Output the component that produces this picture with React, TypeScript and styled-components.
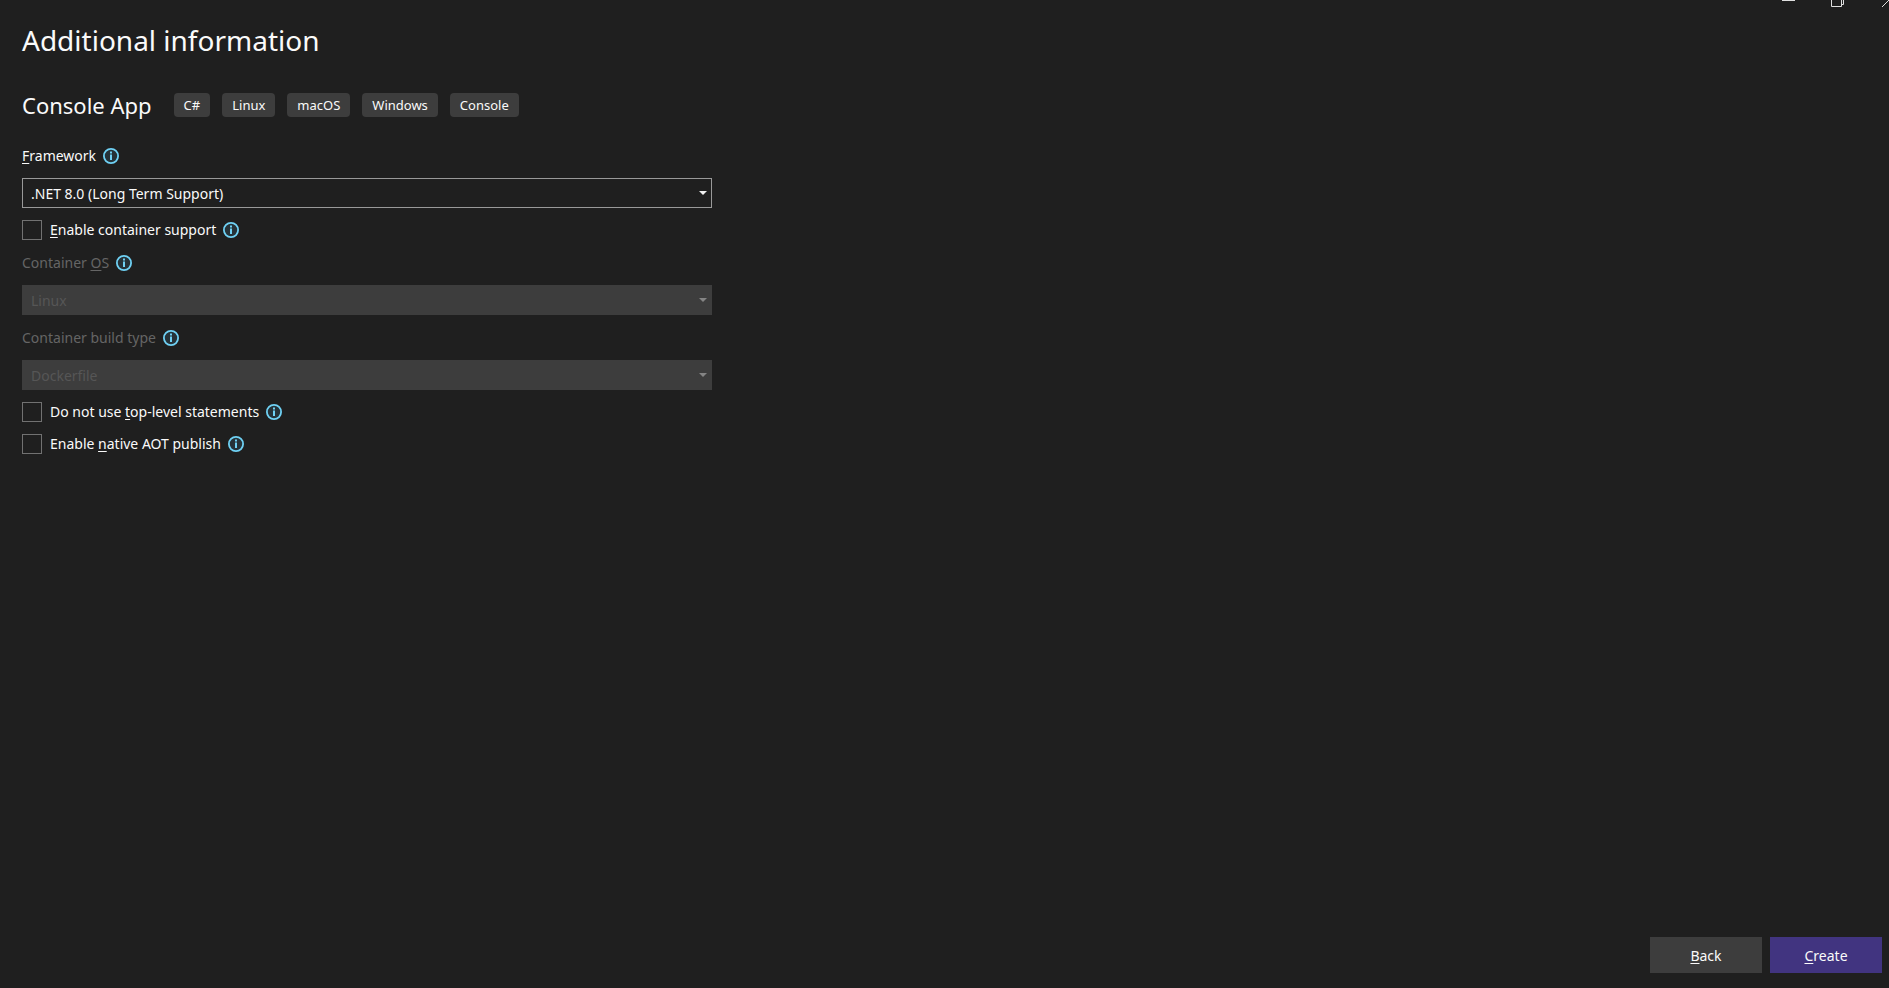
import React, { ReactNode } from "react";
import styled, { createGlobalStyle } from "styled-components";

const GlobalStyle = createGlobalStyle`
  * { box-sizing: border-box; }
  html, body, #root { height: 100%; }
  body {
    margin: 0;
    background: #1f1f1f;
    color: #fafafa;
    font: 14px/20px "Noto Sans", "Open Sans", sans-serif;
  }
`;

const Dialog = styled.div`
  min-height: 100%;
  display: flex;
  flex-direction: column;
  position: relative;
  overflow: hidden;
`;

const WindowControls = styled.div`
  position: absolute;
  top: 0;
  right: -24px;
  display: flex;
`;

const WindowButton = styled.button`
  width: 50px;
  height: 10px;
  padding: 0;
  border: 0;
  background: none;
  color: #e0e0e0;
  svg { display: block; }
`;

const Main = styled.main`
  flex: 1;
  padding: 20px 22px;
`;

const Title = styled.h1`
  margin: 0;
  font-size: 28px;
  line-height: 40px;
  font-weight: 400;
`;

const TemplateHeader = styled.div`
  display: flex;
  align-items: center;
  margin-top: 29px;
`;

const TemplateName = styled.h2`
  margin: 0 22px 0 0;
  font-size: 22px;
  line-height: 32px;
  font-weight: 400;
`;

const TagList = styled.ul`
  display: flex;
  gap: 12px;
  margin: 0;
  padding: 0;
  list-style: none;
`;

const Tag = styled.li`
  padding: 0 10px;
  border-radius: 4px;
  background: #3d3d3d;
  font-size: 13px;
  line-height: 24px;
`;

const Form = styled.form`
  max-width: 690px;
  margin-top: 24px;
`;

const Field = styled.div<{ $disabled?: boolean }>`
  margin-bottom: 12px;
  color: ${(p) => (p.$disabled ? "#656565" : "#fafafa")};
`;

const LabelRow = styled.div`
  display: flex;
  align-items: center;
  gap: 7px;
  line-height: 21px;
`;

const SelectBox = styled.div`
  display: grid;
  align-items: center;
  margin-top: 12px;
  > * { grid-area: 1 / 1; }
  svg { justify-self: end; margin-right: 5px; pointer-events: none; }
`;

const Select = styled.select`
  appearance: none;
  width: 100%;
  height: 30px;
  padding: 2px 24px 0 8px;
  border: 1px solid #999999;
  border-radius: 0;
  background: #1f1f1f;
  color: #fafafa;
  font: inherit;
  &:disabled {
    border-color: #3d3d3d;
    background: #3d3d3d;
    color: #565656;
    opacity: 1;
  }
`;

const CheckRow = styled.div`
  display: flex;
  align-items: center;
  gap: 7px;
  margin-bottom: 12px;
`;

const CheckLabel = styled.label`
  display: flex;
  align-items: center;
  gap: 8px;
`;

const Checkbox = styled.input`
  appearance: none;
  width: 20px;
  height: 20px;
  margin: 0;
  border: 1px solid #717171;
  background: #1f1f1f;
  &:checked { background: #9184ee; }
`;

const AccessKey = styled.span`
  text-decoration: underline;
  text-underline-offset: 2px;
  text-decoration-skip-ink: none;
`;

const Footer = styled.footer`
  display: flex;
  justify-content: flex-end;
  gap: 8px;
  padding: 0 7px 15px;
`;

const ActionButton = styled.button<{ $primary?: boolean }>`
  width: 112px;
  height: 36px;
  padding: 2px 0 0;
  border: 0;
  background: ${(p) => (p.$primary ? "#413480" : "#3d3d3d")};
  color: #fafafa;
  font: inherit;
`;

const InfoIcon = () => (
  <svg width="16" height="16" viewBox="0 0 16 16" aria-hidden="true">
    <circle cx="8" cy="8" r="7.1" fill="#263238" stroke="#6fd1f4" strokeWidth="1.8" />
    <path d="M7 3.6h2v1.8H7zM7 6.6h2v5.4H7z" fill="#6fd1f4" />
  </svg>
);

const Arrow = ({ color }: { color: string }) => (
  <svg width="8" height="4" viewBox="0 0 8 4" aria-hidden="true">
    <path d="M0 0h8L4 4z" fill={color} />
  </svg>
);

const SelectField = (props: { id: string; label: ReactNode; value: string; disabled?: boolean }) => (
  <Field $disabled={props.disabled}>
    <LabelRow>
      <label htmlFor={props.id}>{props.label}</label>
      <InfoIcon />
    </LabelRow>
    <SelectBox>
      <Select id={props.id} disabled={props.disabled}>
        <option>{props.value}</option>
      </Select>
      <Arrow color={props.disabled ? "#858585" : "#f0f0f0"} />
    </SelectBox>
  </Field>
);

const CheckField = ({ children }: { children: ReactNode }) => (
  <CheckRow>
    <CheckLabel>
      <Checkbox type="checkbox" />
      <span>{children}</span>
    </CheckLabel>
    <InfoIcon />
  </CheckRow>
);

const tags = ["C#", "Linux", "macOS", "Windows", "Console"];

export default function App() {
  return (
    <Dialog>
      <GlobalStyle />
      <WindowControls>
        <WindowButton aria-label="Minimize">
          <svg width="50" height="10"><path d="M19 0h13v1H19z" fill="currentColor" /></svg>
        </WindowButton>
        <WindowButton aria-label="Restore">
          <svg width="50" height="10"><path d="M18.500 0V6.500H28.500V0M28.500 4.500H30.500V0" fill="none" stroke="currentColor" /></svg>
        </WindowButton>
        <WindowButton aria-label="Close">
          <svg width="50" height="10"><path d="M19 7L26 0" fill="none" stroke="currentColor" /></svg>
        </WindowButton>
      </WindowControls>
      <Main>
        <Title>Additional information</Title>
        <TemplateHeader>
          <TemplateName>Console App</TemplateName>
          <TagList>
            {tags.map((tag) => <Tag key={tag}>{tag}</Tag>)}
          </TagList>
        </TemplateHeader>
        <Form>
          <SelectField id="framework" label={<><AccessKey>F</AccessKey>ramework</>} value=".NET 8.0 (Long Term Support)" />
          <CheckField><AccessKey>E</AccessKey>nable container support</CheckField>
          <SelectField id="container-os" label={<>Container <AccessKey>O</AccessKey>S</>} value="Linux" disabled />
          <SelectField id="build-type" label="Container build type" value="Dockerfile" disabled />
          <CheckField>Do not use <AccessKey>t</AccessKey>op-level statements</CheckField>
          <CheckField>Enable <AccessKey>n</AccessKey>ative AOT publish</CheckField>
        </Form>
      </Main>
      <Footer>
        <ActionButton type="button"><AccessKey>B</AccessKey>ack</ActionButton>
        <ActionButton type="button" $primary><AccessKey>C</AccessKey>reate</ActionButton>
      </Footer>
    </Dialog>
  );
}
